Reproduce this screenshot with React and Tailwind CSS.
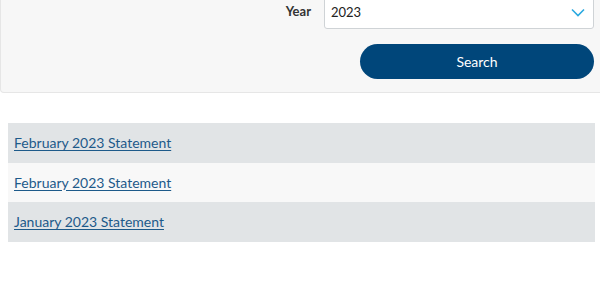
import React from 'react';

const statements = [
  { id: 1, label: 'February 2023 Statement' },
  { id: 2, label: 'February 2023 Statement' },
  { id: 3, label: 'January 2023 Statement' }
];

export default function App() {
  return (
    <div className="w-[600px] h-[306px] overflow-hidden bg-white font-['Lato','Noto_Sans',sans-serif]">
      {/* Filter panel */}
      <div className="-mt-[8px] mr-[-4px] bg-[#f7f7f7] border border-t-0 border-[#e6e6e6] rounded-b-[4px] pl-[8px] pr-[9px] pt-0 pb-[13px]">
        <div className="flex items-center justify-end gap-[13px]">
          <span className="text-[13px] font-bold text-[#333] pt-[3px]">Year</span>
          <div className="w-[270px] h-[37px] bg-white border border-[#cfd3d6] rounded-[3px] flex items-center justify-between pl-[6px] pr-[8px]">
            <span className="text-[13px] text-[#222] pt-[4px]">2023</span>
            <svg width="14" height="9" viewBox="0 0 14 9" fill="none" className="mt-[3px]">
              <path d="M1 1.5L7 7.5L13 1.5" stroke="#2aa9e0" strokeWidth="1.6" />
            </svg>
          </div>
        </div>
        <div className="flex justify-end mt-[15px]">
          <button className="w-[234px] h-[35px] rounded-full bg-[#00467a] text-white text-[14px]">
            Search
          </button>
        </div>
      </div>

      {/* Statements list */}
      <div className="mt-[30px] ml-[8px] w-[587px]">
        {statements.map((s, i) => (
          <div
            key={s.id}
            className={`h-[39.5px] flex items-center px-[6px] ${i % 2 === 0 ? 'bg-[#e1e4e6]' : 'bg-[#f8f8f8]'}`}
          >
            <a href="#" className="text-[14px] text-[#1d5a8a] underline underline-offset-[2px]">
              {s.label}
            </a>
          </div>
        ))}
      </div>
    </div>
  );
}
